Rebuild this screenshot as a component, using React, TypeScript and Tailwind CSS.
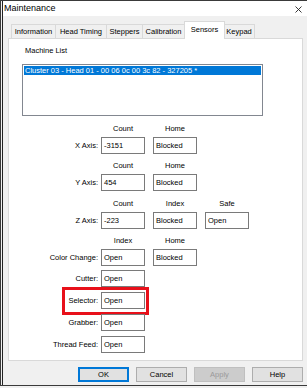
import React from 'react';

const tabs = [
  { name: 'Information', w: 'w-[45px]' },
  { name: 'Head Timing', w: 'w-[52px]' },
  { name: 'Steppers', w: 'w-[37px]' },
  { name: 'Calibration', w: 'w-[43px]' },
  { name: 'Sensors', w: 'w-[41px]', active: true },
  { name: 'Keypad', w: 'w-[32px]' },
];

function Field({ value }: { value: string }) {
  return (
    <div className="w-[44px] h-[17px] border border-[#7a7a7a] bg-white pl-[2px] flex items-center leading-none">
      {value}
    </div>
  );
}

function Headers({ labels }: { labels: string[] }) {
  return (
    <div className="flex h-[9px] leading-[9px] mb-[4px] pl-[92px] gap-[8px]">
      {labels.map((l) => (
        <div key={l} className="w-[44px] text-center">
          {l}
        </div>
      ))}
    </div>
  );
}

function Row({ label, values, className = '', children }: { label: string; values: string[]; className?: string; children?: React.ReactNode }) {
  return (
    <div className={`relative flex items-center ${className}`}>
      <div className="w-[92px] text-right pr-[3px]">{label}</div>
      <div className="flex gap-[8px]">
        {values.map((v, i) => (
          <Field key={i} value={v} />
        ))}
      </div>
      {children}
    </div>
  );
}

export default function App() {
  return (
    <div
      className="w-[307px] h-[388px] bg-[#f0f0f0] text-[7.5px] text-black overflow-hidden"
      style={{ fontFamily: '"Liberation Sans", Arial, sans-serif' }}
    >
      <div className="h-[386px] border-t border-b border-l border-[#3a3a3a] pl-[1px]">
        <div className="h-full border-l border-[#222] flex flex-col">
          {/* Title bar */}
          <div className="h-[15px] bg-white flex items-center justify-between pl-[1px] pr-[5px] shrink-0">
            <span className="text-[9px]">Maintenance</span>
            <svg width="7" height="7" viewBox="0 0 7 7" className="mt-[1px]">
              <path d="M0.5 0.5 L6.5 6.5 M6.5 0.5 L0.5 6.5" stroke="#222" strokeWidth="0.9" />
            </svg>
          </div>

          {/* Tabs */}
          <div className="flex items-end h-[22px] pl-[8px] shrink-0">
            {tabs.map((t) =>
              t.active ? (
                <div
                  key={t.name}
                  className={`${t.w} h-[18px] -mx-[1px] relative z-10 bg-white border border-b-0 border-[#d9d9d9] flex items-center justify-center -mb-[1px] pb-[2px]`}
                >
                  {t.name}
                </div>
              ) : (
                <div
                  key={t.name}
                  className={`${t.w} h-[14px] bg-[#f0f0f0] border border-b-0 border-[#d9d9d9] -ml-[1px] first:ml-0 flex items-center justify-center`}
                >
                  {t.name}
                </div>
              )
            )}
          </div>

          {/* Panel */}
          <div className="ml-[5px] mr-[4px] h-[323px] bg-white border border-[#d9d9d9] flex flex-col shrink-0">
            <div className="mt-[7px] ml-[16px] leading-[10px]">Machine List</div>
            <div className="mt-[8px] ml-[13px] w-[241px] h-[52px] border border-[#828790] bg-white p-[1px]">
              <div className="h-[9px] bg-[#0078d7] text-white leading-[9px] pl-[1px] whitespace-nowrap">
                Cluster 03 - Head 01 - 00 06 0c 00 3c 82 - 327205 *
              </div>
            </div>

            <div className="mt-[8px]">
              <Headers labels={['Count', 'Home']} />
              <Row label="X Axis:" values={['-3151', 'Blocked']} />
            </div>
            <div className="mt-[7px]">
              <Headers labels={['Count', 'Home']} />
              <Row label="Y Axis:" values={['454', 'Blocked']} />
            </div>
            <div className="mt-[8px]">
              <Headers labels={['Count', 'Index', 'Safe']} />
              <Row label="Z Axis:" values={['-223', 'Blocked', 'Open']} />
            </div>
            <div className="mt-[7px]">
              <Headers labels={['Index', 'Home']} />
              <Row label="Color Change:" values={['Open', 'Blocked']} />
            </div>
            <Row label="Cutter:" values={['Open']} className="mt-[4px]" />
            <Row label="Selector:" values={['Open']} className="mt-[5px]">
              <div className="absolute left-[53px] -top-[5px] w-[87px] h-[28px] border-[3px] border-[#e8101a]" />
            </Row>
            <Row label="Grabber:" values={['Open']} className="mt-[5px]" />
            <Row label="Thread Feed:" values={['Open']} className="mt-[5px]" />
          </div>

          {/* Buttons */}
          <div className="flex justify-end gap-[7px] pr-[4px] mt-[6px]">
            <button className="w-[51px] h-[15px] bg-[#e1e1e1] border-2 border-[#0078d7] leading-none">OK</button>
            <button className="w-[51px] h-[15px] bg-[#e1e1e1] border border-[#adadad] leading-none">Cancel</button>
            <button className="w-[51px] h-[15px] bg-[#cccccc] border border-[#bfbfbf] text-[#9a9a9a] leading-none">Apply</button>
            <button className="w-[51px] h-[15px] bg-[#e1e1e1] border border-[#adadad] leading-none">Help</button>
          </div>
        </div>
      </div>
    </div>
  );
}
